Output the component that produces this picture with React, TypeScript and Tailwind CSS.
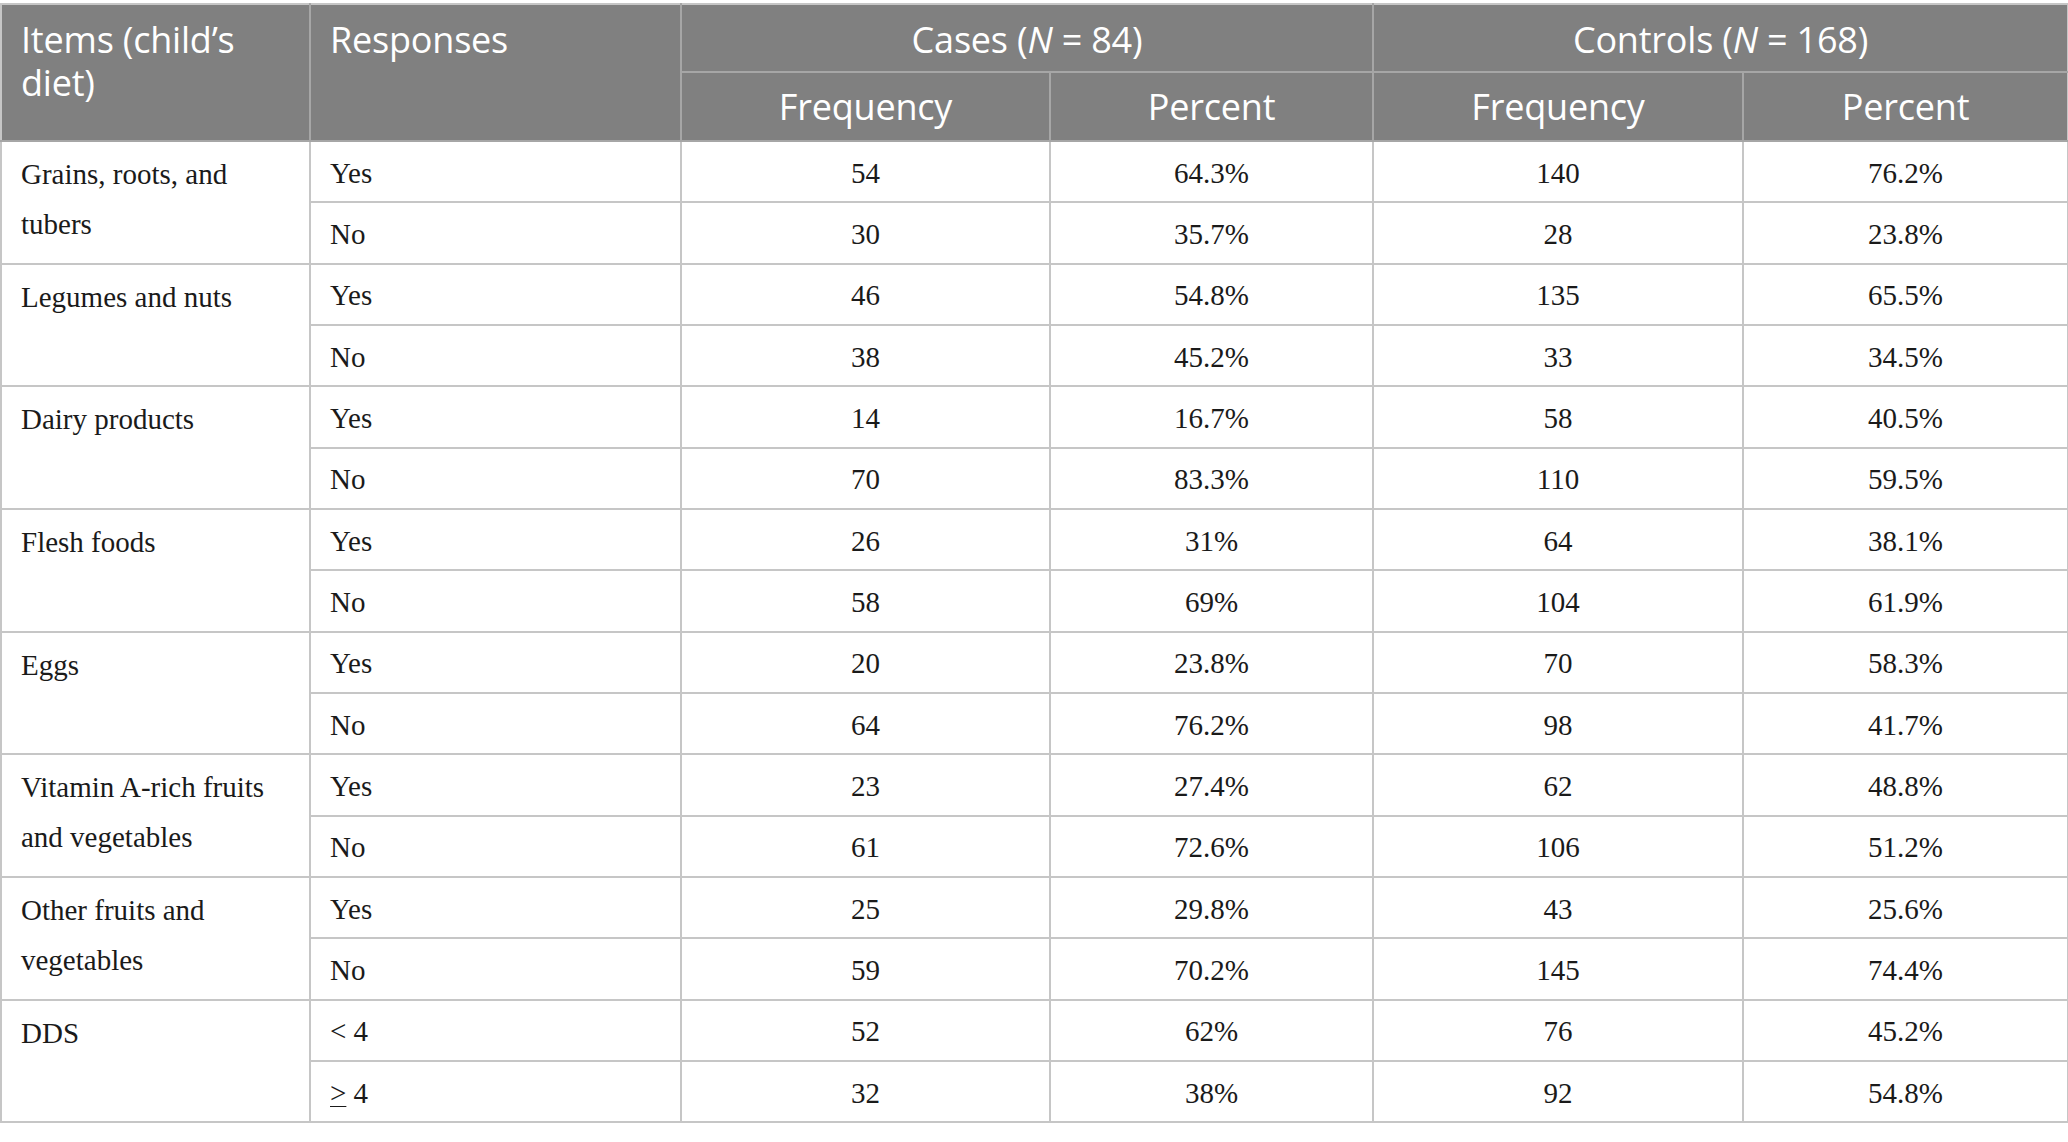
import React from "react";

type Group = { item: string; rows: [string, string, string, string, string][] };

const data: Group[] = [
  { item: "Grains, roots, and tubers", rows: [["Yes", "54", "64.3%", "140", "76.2%"], ["No", "30", "35.7%", "28", "23.8%"]] },
  { item: "Legumes and nuts", rows: [["Yes", "46", "54.8%", "135", "65.5%"], ["No", "38", "45.2%", "33", "34.5%"]] },
  { item: "Dairy products", rows: [["Yes", "14", "16.7%", "58", "40.5%"], ["No", "70", "83.3%", "110", "59.5%"]] },
  { item: "Flesh foods", rows: [["Yes", "26", "31%", "64", "38.1%"], ["No", "58", "69%", "104", "61.9%"]] },
  { item: "Eggs", rows: [["Yes", "20", "23.8%", "70", "58.3%"], ["No", "64", "76.2%", "98", "41.7%"]] },
  { item: "Vitamin A-rich fruits and vegetables", rows: [["Yes", "23", "27.4%", "62", "48.8%"], ["No", "61", "72.6%", "106", "51.2%"]] },
  { item: "Other fruits and vegetables", rows: [["Yes", "25", "29.8%", "43", "25.6%"], ["No", "59", "70.2%", "145", "74.4%"]] },
  { item: "DDS", rows: [["< 4", "52", "62%", "76", "45.2%"], ["≥ 4", "32", "38%", "92", "54.8%"]] },
];

const hd = "border-2 border-[#a6a6a6] bg-[#808080] text-white font-normal text-[36px] tracking-[-0.2px]";
const bd = "border-2 border-[#c6c6c6] text-[#1a1a1a]";

export default function App() {
  return (
    <div className="w-[2068px] h-[1142px] bg-white pt-[3px] overflow-hidden">
      <table
        className="table-fixed border-collapse w-[2067px]"
        style={{ fontFamily: "'Liberation Serif', 'Times New Roman', serif" }}
      >
        <colgroup>
          <col className="w-[309px]" />
          <col className="w-[371px]" />
          <col className="w-[369px]" />
          <col className="w-[323px]" />
          <col className="w-[370px]" />
          <col className="w-[325px]" />
        </colgroup>
        <thead style={{ fontFamily: "'Open Sans', 'Noto Sans', sans-serif" }}>
          <tr className="h-[68px]">
            <th rowSpan={2} className={`${hd} align-top text-left pl-[19px] pt-[13px] leading-[43px] border-t-[#c6c6c6] border-l-[#c6c6c6]`}>
              Items (child’s
              <br />
              diet)
            </th>
            <th rowSpan={2} className={`${hd} align-top text-left pl-[19px] pt-[13px] leading-[43px] border-t-[#c6c6c6]`}>
              Responses
            </th>
            <th colSpan={2} className={`${hd} text-center align-middle leading-[43px] pt-[3px] border-t-[#c6c6c6]`}>
              Cases (<i>N</i> = 84)
            </th>
            <th colSpan={2} className={`${hd} text-center align-middle leading-[43px] pt-[3px] border-t-[#c6c6c6] border-r-[#c6c6c6]`}>
              Controls (<i>N</i> = 168)
            </th>
          </tr>
          <tr className="h-[69px]">
            <th className={`${hd} text-center align-middle leading-[43px]`}>Frequency</th>
            <th className={`${hd} text-center align-middle leading-[43px]`}>Percent</th>
            <th className={`${hd} text-center align-middle leading-[43px]`}>Frequency</th>
            <th className={`${hd} text-center align-middle leading-[43px] border-r-[#c6c6c6]`}>Percent</th>
          </tr>
        </thead>
        <tbody className="text-[29px]">
          {data.map((g) =>
            g.rows.map((r, i) => (
              <tr key={g.item + i} className="h-[61.33px]">
                {i === 0 && (
                  <td rowSpan={2} className={`${bd} align-top text-left pl-[19px] pr-[10px] pt-[7px] leading-[50px]`}>
                    {g.item}
                  </td>
                )}
                <td className={`${bd} align-middle text-left pl-[19px] pt-[2px] leading-[40px]`}>
                  {r[0] === "≥ 4" ? (
                    <span>
                      <span className="underline decoration-1 underline-offset-[3px]">&gt;</span> 4
                    </span>
                  ) : (
                    r[0]
                  )}
                </td>
                <td className={`${bd} align-middle text-center pt-[2px] leading-[40px]`}>{r[1]}</td>
                <td className={`${bd} align-middle text-center pt-[2px] leading-[40px]`}>{r[2]}</td>
                <td className={`${bd} align-middle text-center pt-[2px] leading-[40px]`}>{r[3]}</td>
                <td className={`${bd} align-middle text-center pt-[2px] leading-[40px]`}>{r[4]}</td>
              </tr>
            ))
          )}
        </tbody>
      </table>
    </div>
  );
}
